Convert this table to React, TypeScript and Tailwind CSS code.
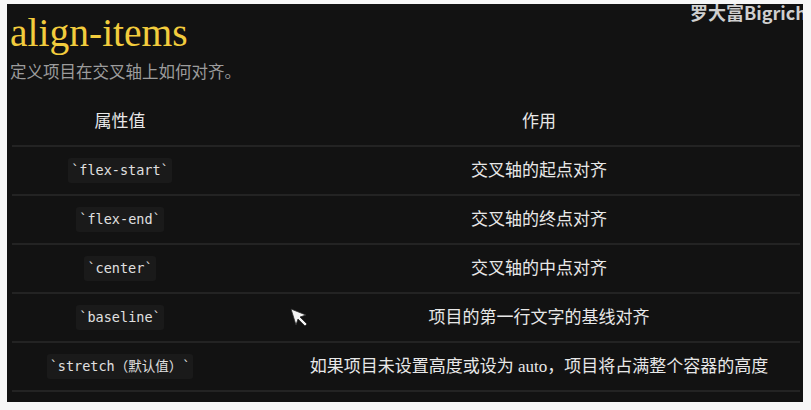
import React from "react";

const rows: { code: string; desc: React.ReactNode }[] = [
  { code: "`flex-start`", desc: "交叉轴的起点对齐" },
  { code: "`flex-end`", desc: "交叉轴的终点对齐" },
  { code: "`center`", desc: "交叉轴的中点对齐" },
  { code: "`baseline`", desc: "项目的第一行文字的基线对齐" },
  {
    code: "`stretch（默认值）`",
    desc: "如果项目未设置高度或设为 auto，项目将占满整个容器的高度",
  },
];

const cjk = { fontFamily: '"Liberation Serif", "Noto Sans CJK SC", sans-serif' };
const mono = { fontFamily: '"DejaVu Sans Mono", "Noto Sans CJK SC", monospace' };

export default function App() {
  return (
    <div className="w-[811px] h-[410px] bg-[#f7f7f7] pt-[4px] pl-[7px]">
      <div className="relative w-[796px] h-[398px] bg-[#121212] overflow-hidden">
        <div
          className="absolute left-[683px] top-[-5px] text-[18px] font-bold text-[#cfcfcf] whitespace-nowrap"
          style={{ fontFamily: '"Noto Sans CJK SC", "Open Sans", sans-serif' }}
        >
          罗大富Bigrich
        </div>
        <div className="pl-[3px]">
          <div
            className="text-[39.5px] leading-[44px] pt-[7px] text-[#f2cc3d]"
            style={{ fontFamily: '"Liberation Serif", serif' }}
          >
            align-items
          </div>
          <div className="text-[16.5px] leading-[24px] mt-[6px] text-[#9c9c9c]" style={cjk}>
            定义项目在交叉轴上如何对齐。
          </div>
        </div>
        <div className="ml-[5px] w-[788px] mt-[13px] text-[#e8e8e8]" style={cjk}>
          <div className="flex h-[49px] items-center border-b-2 border-[#232323] text-[17px]">
            <div className="w-[216px] text-center">属性值</div>
            <div className="flex-1 text-center pl-[50px]">作用</div>
          </div>
          {rows.map((r, i) => (
            <div key={i} className="flex h-[49px] items-center border-b-2 border-[#232323]">
              <div className="w-[216px] flex justify-center">
                <span
                  className="bg-[#1a1a1a] px-[3px] py-[2px] rounded-[3px] text-[13.5px] text-[#e0e0e0]"
                  style={mono}
                >
                  {r.code}
                </span>
              </div>
              <div className="flex-1 text-center pl-[50px] text-[17px]">{r.desc}</div>
            </div>
          ))}
        </div>
        <svg
          className="absolute left-[282px] top-[303px]"
          width="22"
          height="24"
          viewBox="0 0 22 24"
        >
          <path
            d="M2 2 L17 8 L11 10 L18 17 L16 19 L9 12 L7 18 Z"
            fill="#f4f4f4"
            stroke="#2a2a2a"
            strokeWidth="0.8"
            strokeLinejoin="round"
          />
        </svg>
      </div>
    </div>
  );
}
